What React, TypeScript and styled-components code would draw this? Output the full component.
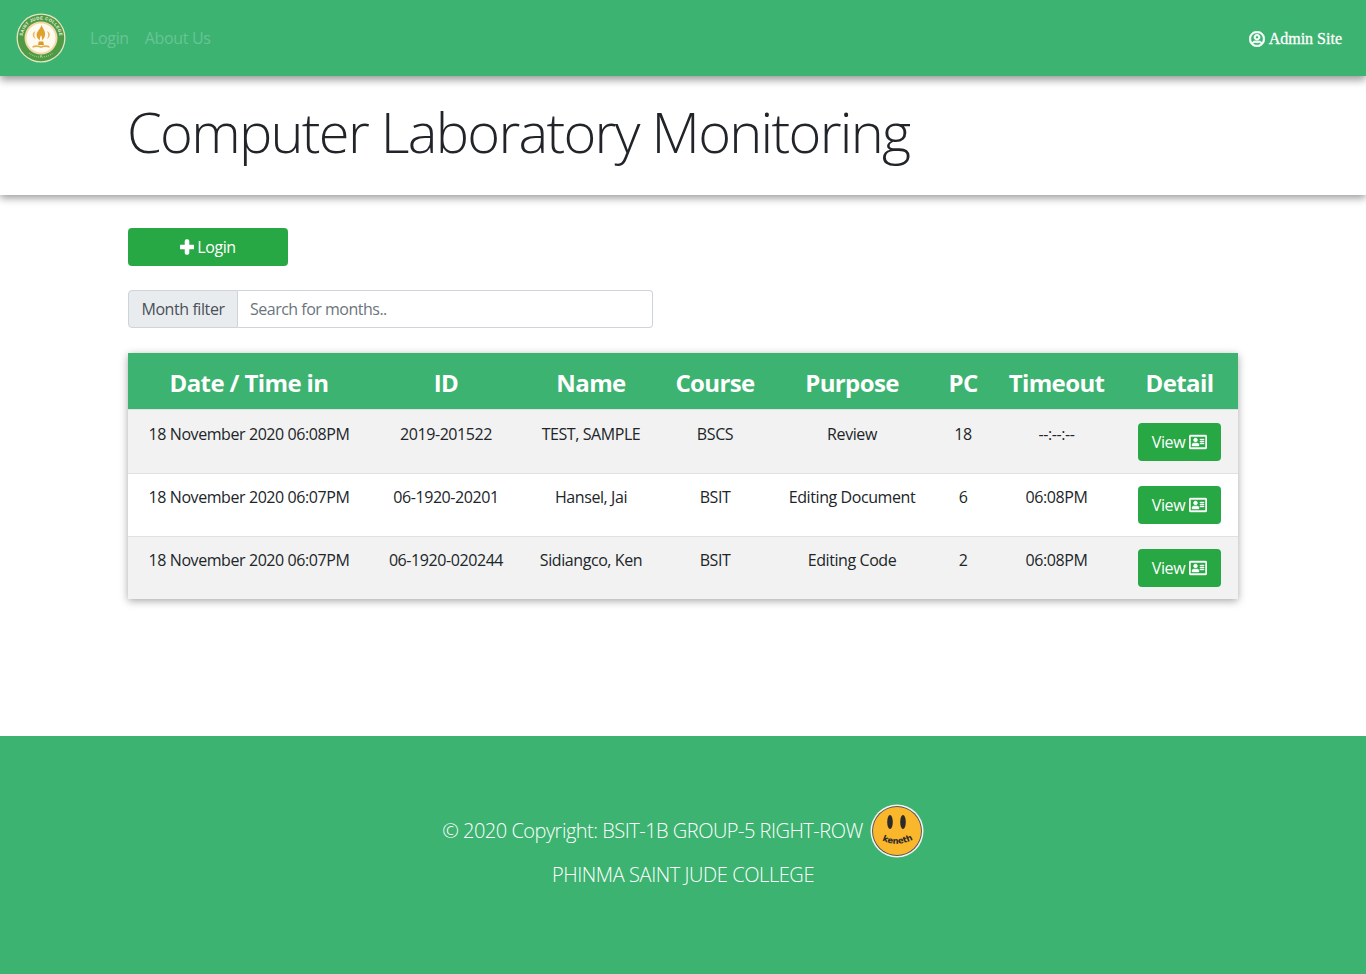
import React from "react";
import styled, { createGlobalStyle } from "styled-components";

const FONT = `"Open Sans", "Noto Sans", "Liberation Sans", sans-serif`;

const Global = createGlobalStyle`
  html, body { margin: 0; padding: 0; background: #fff; }
  body { font-family: ${FONT}; font-size: 16px; line-height: 24px; color: #212529; letter-spacing: -0.42px; }
  * { box-sizing: border-box; }
`;

const Page = styled.div`
  display: flex;
  flex-direction: column;
  min-height: 974px;
`;

const Navbar = styled.nav`
  height: 76px;
  background: #3cb371;
  display: flex;
  align-items: center;
  padding: 0 24px 0 16px;
  box-shadow: 0 4px 8px rgba(0, 0, 0, 0.4);
  position: relative;
  z-index: 2;
`;

const Brand = styled.div`
  width: 50px;
  height: 50px;
  margin-right: 24px;
  flex: none;
  display: flex;
`;

const NavLink = styled.a`
  color: #68c495;
  margin-right: 16px;
  letter-spacing: -0.34px;
`;

const AdminLink = styled.a`
  margin-left: auto;
  color: #fff;
  display: flex;
  align-items: center;
  gap: 4px;
  padding-top: 1px;
  font-family: "Liberation Serif", serif;
  font-weight: 400;
  letter-spacing: 0;
  -webkit-text-stroke: 0.3px #fff;
`;

const Hero = styled.header`
  height: 119px;
  background: #fff;
  padding: 24px 128px 0 127px;
  box-shadow: 0 3px 8px rgba(0, 0, 0, 0.4);
  position: relative;
  z-index: 1;
`;

const Title = styled.h1`
  margin: 0;
  font-size: 56px;
  font-weight: 300;
  line-height: 62px;
  letter-spacing: -1.72px;
  color: #212529;
`;

const Main = styled.main`
  flex: 1;
  padding: 33px 128px 0;
`;

const LoginButton = styled.button`
  width: 160px;
  height: 38px;
  border: 0;
  border-radius: 4px;
  background: #28a745;
  color: #fff;
  font: inherit;
  letter-spacing: inherit;
  display: flex;
  align-items: center;
  justify-content: center;
  gap: 3px;
`;

const InputGroup = styled.div`
  display: flex;
  width: 525px;
  height: 38px;
  margin-top: 24px;
`;

const InputLabel = styled.span`
  width: 110px;
  display: flex;
  align-items: center;
  justify-content: center;
  background: #e9ecef;
  color: #495057;
  border: 1px solid #ced4da;
  border-radius: 4px 0 0 4px;
`;

const SearchInput = styled.input`
  flex: 1;
  min-width: 0;
  border: 1px solid #ced4da;
  border-left: 0;
  border-radius: 0 4px 4px 0;
  padding: 0 12px;
  font: inherit;
  letter-spacing: -0.5px;
  color: #495057;
  &::placeholder { color: #6c757d; opacity: 1; }
`;

const Table = styled.table`
  width: 1110px;
  table-layout: fixed;
  border-collapse: separate;
  border-spacing: 0;
  margin-top: 25px;
  box-shadow: 0 2px 8px rgba(0, 0, 0, 0.35);
  text-align: center;
`;

const HeadRow = styled.tr`
  height: 56px;
  background: #3cb371;
`;

const HeadCell = styled.th`
  color: #fff;
  font-size: 24px;
  font-weight: 700;
  line-height: 28px;
  padding: 3px 0 0;
  letter-spacing: -0.62px;
`;

const Row = styled.tr<{ $odd: boolean }>`
  height: 63px;
  background: ${(p) => (p.$odd ? "#f2f2f2" : "#fff")};
  &:first-child { height: 64px; }
  &:first-child td { padding-top: 12px; }
`;

const Cell = styled.td`
  padding: 11px 0 0;
  border-top: 1px solid #dee2e6;
  vertical-align: top;
`;

const ViewButton = styled.button`
  width: 83px;
  height: 38px;
  margin-top: 1px;
  border: 0;
  border-radius: 4px;
  background: #28a745;
  color: #fff;
  font: inherit;
  letter-spacing: inherit;
  display: inline-flex;
  align-items: center;
  justify-content: center;
  gap: 4px;
`;

const Footer = styled.footer`
  height: 238px;
  background: #3cb371;
  color: #fff;
  font-size: 20px;
  font-weight: 300;
  display: flex;
  flex-direction: column;
  align-items: center;
  padding-top: 68px;
  letter-spacing: -0.5px;
`;

const CopyRow = styled.div`
  display: flex;
  align-items: center;
  gap: 7px;
  height: 54px;
`;

const College = styled.div`
  margin-top: 2px;
  line-height: 30px;
  letter-spacing: -0.42px;
`;

const Logo = () => (
  <svg viewBox="0 0 50 50" width="50" height="50" aria-hidden="true">
    <circle cx="25" cy="25" r="24.5" fill="#e6e6c0" />
    <circle cx="25" cy="25" r="23.2" fill="#4f9a45" />
    <circle cx="25" cy="25" r="16.500" fill="#f1d9a4" />
    <circle cx="25" cy="25" r="14.500" fill="#fffaf0" />
    <defs>
      <path id="logoArc" d="M9 34.300A18.500 18.500 0 1 1 41 34.300" />
    </defs>
    <text fontFamily="Liberation Sans, sans-serif" fontSize="4.400" fontWeight="700" fill="#f4f4e0" letterSpacing="0.3">
      <textPath href="#logoArc" startOffset="50%" textAnchor="middle">SAINT JUDE COLLEGE</textPath>
    </text>
    <path d="M25.500 12c.6 3 3.800 5 3.600 9.200-.1 2.800-1.700 4.800-3.300 6.300.5-2 .1-3.700-.7-5.200-1 1.600-1.700 3.300-1 5.200-2.200-1.400-3.700-3.400-3.500-6 .2-3.200 3.900-5.300 4.900-9.500z" fill="#e0a030" />
    <path d="M19.500 18c-1.500 2.500-1.800 5.500.2 8-1.800-.8-3-2.400-3-4.500 0-1.500 1.200-2.700 2.800-3.500zM31 18c1.500 2.500 1.800 5.500-.2 8 1.800-.8 3-2.400 3-4.500 0-1.500-1.200-2.700-2.800-3.500z" fill="#e8b860" />
    <path d="M22.800 28.500h4.400l.8 3.500h-6z" fill="#d99a2b" />
    <path d="M16.500 33c3-1.300 6-1 8.500.2 2.500-1.200 5.500-1.500 8.500-.2v1.800c-3-1.200-6-.9-8.500.3-2.500-1.200-5.500-1.500-8.500-.3z" fill="#e3b050" />
    <circle cx="25" cy="43" r="1" fill="#cfe3b0" opacity="0.7" />
    <path d="M13 40a19.500 19.500 0 0 0 24 0" fill="none" stroke="#cfe3b0" strokeWidth="1.200" strokeDasharray="1 1" opacity="0.6" />
  </svg>
);

const UserCircle = () => (
  <svg width="16" height="16" viewBox="0 0 496 512" fill="#fff" stroke="#fff" strokeWidth="22" aria-hidden="true">
    <path d="M248 104c-53 0-96 43-96 96s43 96 96 96 96-43 96-96-43-96-96-96zm0 144c-26.500 0-48-21.500-48-48s21.500-48 48-48 48 21.500 48 48-21.500 48-48 48zm0-240C111 8 0 119 0 256s111 248 248 248 248-111 248-248S385 8 248 8zm0 448c-49.700 0-95.100-18.300-130.100-48.400 14.900-23 40.400-38.600 69.600-39.500 20.800 6.400 40.600 9.600 60.500 9.600s39.700-3.100 60.500-9.600c29.200 1 54.700 16.500 69.600 39.500-35 30.100-80.400 48.400-130.100 48.400zm162.700-84.100c-24.400-31.400-62.100-51.900-105.100-51.900-10.200 0-26 9.600-57.600 9.600-31.500 0-47.400-9.600-57.600-9.600-42.900 0-80.600 20.500-105.100 51.900C61.900 339.200 48 299.200 48 256c0-110.300 89.700-200 200-200s200 89.700 200 200c0 43.200-13.900 83.200-37.300 115.900z" />
  </svg>
);

const Plus = () => (
  <svg width="14" height="16" viewBox="0 0 448 512" fill="#fff" stroke="#fff" strokeWidth="50" aria-hidden="true">
    <path d="M416 208H272V64c0-17.670-14.330-32-32-32h-32c-17.670 0-32 14.330-32 32v144H32c-17.670 0-32 14.330-32 32v32c0 17.670 14.330 32 32 32h144v144c0 17.670 14.330 32 32 32h32c17.670 0 32-14.330 32-32V304h144c17.670 0 32-14.330 32-32v-32c0-17.670-14.330-32-32-32z" />
  </svg>
);

const IdCard = () => (
  <svg width="18" height="16" viewBox="0 0 576 512" fill="#fff" stroke="#fff" strokeWidth="14" aria-hidden="true">
    <path d="M528 32H48C21.500 32 0 53.500 0 80v352c0 26.500 21.500 48 48 48h480c26.500 0 48-21.500 48-48V80c0-26.500-21.500-48-48-48zm0 400H48V80h480v352zM208 256c35.300 0 64-28.700 64-64s-28.700-64-64-64-64 28.700-64 64 28.700 64 64 64zm-89.600 128h179.200c12.400 0 22.400-8.600 22.400-19.200v-19.200c0-31.800-30.100-57.600-67.200-57.600-10.800 0-18.700 8-44.800 8-26.900 0-33.400-8-44.800-8-37.100 0-67.200 25.800-67.200 57.600v19.200c0 10.600 10 19.200 22.400 19.200zM360 320h112c4.400 0 8-3.600 8-8v-16c0-4.400-3.600-8-8-8H360c-4.400 0-8 3.600-8 8v16c0 4.400 3.600 8 8 8zm0-64h112c4.400 0 8-3.600 8-8v-16c0-4.400-3.600-8-8-8H360c-4.400 0-8 3.600-8 8v16c0 4.400 3.600 8 8 8zm0-64h112c4.400 0 8-3.600 8-8v-16c0-4.400-3.600-8-8-8H360c-4.400 0-8 3.600-8 8v16c0 4.400 3.600 8 8 8z" />
  </svg>
);

const Smiley = () => (
  <svg width="54" height="54" viewBox="0 0 54 54" aria-hidden="true">
    <circle cx="27" cy="27" r="26.500" fill="#f4f4f4" />
    <circle cx="27" cy="27" r="25" fill="#555" />
    <circle cx="27" cy="27" r="24" fill="#fbb72c" />
    <ellipse cx="20" cy="18" rx="2.800" ry="7" fill="#2c2a2a" />
    <ellipse cx="33" cy="18" rx="2.800" ry="7" fill="#2c2a2a" />
    <defs>
      <path id="smileArc" d="M11 36Q27 44 44 35" />
    </defs>
    <text fontFamily="DejaVu Sans, sans-serif" fontSize="8.500" fontWeight="700" fill="#2c2a2a" letterSpacing="-0.2">
      <textPath href="#smileArc" startOffset="50%" textAnchor="middle">keneth</textPath>
    </text>
  </svg>
);

const COLUMNS = [
  { label: "Date / Time in", width: 242 },
  { label: "ID", width: 152 },
  { label: "Name", width: 138 },
  { label: "Course", width: 110 },
  { label: "Purpose", width: 164 },
  { label: "PC", width: 58 },
  { label: "Timeout", width: 129 },
  { label: "Detail", width: 117 },
];

const ROWS = [
  ["18 November 2020 06:08PM", "2019-201522", "TEST, SAMPLE", "BSCS", "Review", "18", "--:--:--"],
  ["18 November 2020 06:07PM", "06-1920-20201", "Hansel, Jai", "BSIT", "Editing Document", "6", "06:08PM"],
  ["18 November 2020 06:07PM", "06-1920-020244", "Sidiangco, Ken", "BSIT", "Editing Code", "2", "06:08PM"],
];

export default function App() {
  return (
    <Page>
      <Global />
      <Navbar>
        <Brand><Logo /></Brand>
        <NavLink>Login</NavLink>
        <NavLink>About Us</NavLink>
        <AdminLink><UserCircle />Admin Site</AdminLink>
      </Navbar>
      <Hero>
        <Title>Computer Laboratory Monitoring</Title>
      </Hero>
      <Main>
        <LoginButton><Plus />Login</LoginButton>
        <InputGroup>
          <InputLabel>Month filter</InputLabel>
          <SearchInput placeholder="Search for months.." />
        </InputGroup>
        <Table>
          <colgroup>
            {COLUMNS.map((c) => <col key={c.label} width={c.width} />)}
          </colgroup>
          <thead>
            <HeadRow>
              {COLUMNS.map((c) => <HeadCell key={c.label}>{c.label}</HeadCell>)}
            </HeadRow>
          </thead>
          <tbody>
            {ROWS.map((r, i) => (
              <Row key={i} $odd={i % 2 === 0}>
                {r.map((v, j) => <Cell key={j}>{v}</Cell>)}
                <Cell>
                  <ViewButton>View <IdCard /></ViewButton>
                </Cell>
              </Row>
            ))}
          </tbody>
        </Table>
      </Main>
      <Footer>
        <CopyRow>© 2020 Copyright: BSIT-1B GROUP-5 RIGHT-ROW <Smiley /></CopyRow>
        <College>PHINMA SAINT JUDE COLLEGE</College>
      </Footer>
    </Page>
  );
}
